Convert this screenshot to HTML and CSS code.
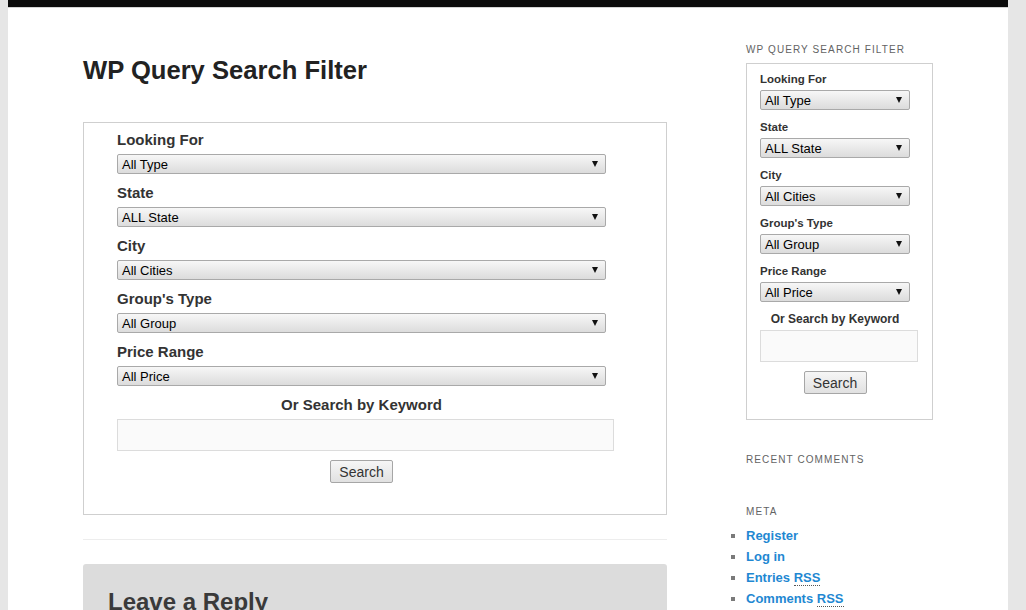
FILE: index.html
```html
<!DOCTYPE html>
<html lang="en">
<head>
<meta charset="utf-8">
<title>WP Query Search Filter</title>
<link rel="stylesheet" href="styles.css">
</head>
<body>
<div class="page">
  <div class="topbar"></div>
  <div class="layout">
    <main class="main">
      <h1 class="entry-title">WP Query Search Filter</h1>
      <form class="filter-box">
        <div class="field">
          <div class="lbl">Looking For</div>
          <div class="select"><span>All Type</span><span class="arrow"></span></div>
        </div>
        <div class="field">
          <div class="lbl">State</div>
          <div class="select"><span>ALL State</span><span class="arrow"></span></div>
        </div>
        <div class="field">
          <div class="lbl">City</div>
          <div class="select"><span>All Cities</span><span class="arrow"></span></div>
        </div>
        <div class="field">
          <div class="lbl">Group's Type</div>
          <div class="select"><span>All Group</span><span class="arrow"></span></div>
        </div>
        <div class="field">
          <div class="lbl">Price Range</div>
          <div class="select"><span>All Price</span><span class="arrow"></span></div>
        </div>
        <div class="lbl keyword">Or Search by Keyword</div>
        <input class="kw-input" type="text">
        <div class="btn-row"><button type="button" class="btn">Search</button></div>
      </form>
      <hr class="sep">
      <div class="reply">
        <h3 class="reply-title">Leave a Reply</h3>
      </div>
    </main>
    <aside class="sidebar">
      <h3 class="widget-title">WP Query Search Filter</h3>
      <form class="filter-box side">
        <div class="field">
          <div class="lbl">Looking For</div>
          <div class="select"><span>All Type</span><span class="arrow"></span></div>
        </div>
        <div class="field">
          <div class="lbl">State</div>
          <div class="select"><span>ALL State</span><span class="arrow"></span></div>
        </div>
        <div class="field">
          <div class="lbl">City</div>
          <div class="select"><span>All Cities</span><span class="arrow"></span></div>
        </div>
        <div class="field">
          <div class="lbl">Group's Type</div>
          <div class="select"><span>All Group</span><span class="arrow"></span></div>
        </div>
        <div class="field">
          <div class="lbl">Price Range</div>
          <div class="select"><span>All Price</span><span class="arrow"></span></div>
        </div>
        <div class="lbl keyword">Or Search by Keyword</div>
        <input class="kw-input" type="text">
        <div class="btn-row"><button type="button" class="btn">Search</button></div>
      </form>
      <h3 class="widget-title recent">Recent Comments</h3>
      <h3 class="widget-title meta">Meta</h3>
      <ul class="meta-list">
        <li><a href="#">Register</a></li>
        <li><a href="#">Log in</a></li>
        <li><a href="#">Entries <abbr title="Really Simple Syndication">RSS</abbr></a></li>
        <li><a href="#">Comments <abbr title="Really Simple Syndication">RSS</abbr></a></li>
      </ul>
    </aside>
  </div>
</div>
</body>
</html>
```
FILE: styles.css
```css
html, body {
  margin: 0;
  padding: 0;
}
body {
  background: #e6e6e6;
  font-family: "Liberation Sans", Arial, sans-serif;
  color: #333;
  overflow: hidden;
}
.page {
  width: 1000px;
  margin-left: 8px;
  min-height: 610px;
  background: #fff;
}
.topbar {
  height: 7px;
  background: #0b0b0b;
  border-bottom: 1px solid #d4d4d4;
}
.layout {
  display: flex;
  padding-left: 75px;
}
.main {
  width: 584px;
  padding-top: 47px;
}
.entry-title {
  margin: 0;
  font-size: 25.6px;
  line-height: 30px;
  font-weight: bold;
  color: #222;
}
.filter-box {
  margin: 37px 0 0;
  border: 1px solid #cfcfcf;
  padding: 8px 0 31px 33px;
  display: flex;
  flex-direction: column;
}
.filter-box > * {
  width: 489px;
}
.lbl {
  font-size: 15px;
  line-height: 18px;
  font-weight: bold;
  color: #333;
  margin-bottom: 5px;
}
.keyword {
  text-align: center;
}
.select {
  box-sizing: border-box;
  height: 20px;
  border: 1px solid #a9a9a9;
  border-radius: 2px;
  background: linear-gradient(#f7f7f7, #dcdcdc);
  display: flex;
  align-items: center;
  justify-content: space-between;
  padding: 0 7px 0 4px;
  font-size: 13px;
  color: #000;
  margin-bottom: 10px;
}
.arrow {
  width: 0;
  height: 0;
  border-left: 3px solid transparent;
  border-right: 3px solid transparent;
  border-top: 6px solid #111;
}
.kw-input {
  box-sizing: border-box;
  width: 497px !important;
  height: 32px;
  margin: 0 0 9px;
  border: 1px solid #dcdcdc;
  background: #fafafa;
  padding: 0;
  font: inherit;
}
.btn-row {
  display: flex;
  justify-content: center;
}
.btn {
  box-sizing: border-box;
  height: 23px;
  width: 63px;
  padding: 0;
  margin: 0;
  border: 1px solid #a6a6a6;
  border-radius: 2px;
  background: linear-gradient(#f6f6f6, #e1e1e1);
  font-family: "Liberation Sans", Arial, sans-serif;
  font-size: 14px;
  color: #333;
}
.sep {
  margin: 24px 0 0;
  border: 0;
  border-top: 1px solid #ededed;
  height: 0;
}
.reply {
  margin-top: 24px;
  background: #dcdcdc;
  border-radius: 3px;
  padding: 23px 25px;
  height: 60px;
}
.reply-title {
  margin: 0;
  font-size: 24px;
  line-height: 30px;
  font-weight: bold;
  color: #3a3a3a;
}

/* Sidebar */
.sidebar {
  margin-left: 79px;
  width: 230px;
  padding-top: 35px;
}
.widget-title {
  margin: 0;
  font-size: 10px;
  line-height: 14px;
  font-weight: normal;
  letter-spacing: 1.1px;
  text-transform: uppercase;
  color: #636363;
}
.filter-box.side {
  margin-top: 6px;
  width: 187px;
  box-sizing: border-box;
  padding: 8px 0 25px 13px;
}
.filter-box.side > * {
  width: 150px;
}
.side .lbl {
  font-size: 11.5px;
  line-height: 14px;
  margin-bottom: 4px;
}
.side .select {
  margin-bottom: 10px;
  padding-right: 7px;
}
.side .keyword {
  font-size: 12px;
  line-height: 14px;
  margin-bottom: 4px;
}
.side .kw-input {
  width: 158px !important;
}
.widget-title.recent {
  margin-top: 33px;
}
.widget-title.meta {
  margin-top: 38px;
}
.meta-list {
  list-style: none;
  margin: 6px 0 0;
  padding: 0;
}
.meta-list li {
  display: flex;
  align-items: center;
  font-size: 13px;
  line-height: 21px;
  font-weight: bold;
}
.meta-list li::before {
  content: "";
  width: 4px;
  height: 4px;
  background: #7a7a7a;
  margin-left: -15px;
  margin-right: 11px;
}
.meta-list a {
  color: #1f88d2;
  text-decoration: none;
}
.meta-list abbr {
  text-decoration: none;
  border-bottom: 1px dotted #555;
}
```
